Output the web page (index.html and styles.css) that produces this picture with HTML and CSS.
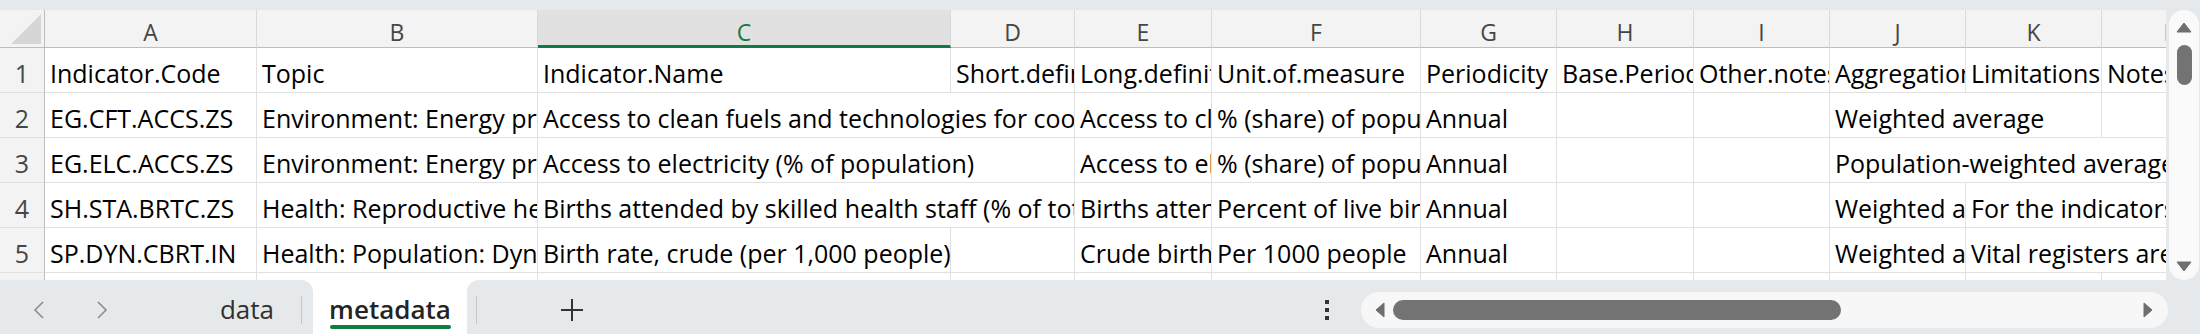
FILE: index.html
```html
<!DOCTYPE html>
<html lang="en">
  <head>
    <meta charset="UTF-8" />
    <meta name="viewport" content="width=device-width, initial-scale=1.0" />
    <title>metadata</title>
    <link rel="stylesheet" href="styles.css">
  </head>

  <body>
    <div class="app">
      <div class="top-strip"></div>

      <div class="main">
        <div class="sheet">
          <div class="grid">
            <!-- column headers -->
            <div class="cell corner">
              <svg width="30" height="30" viewBox="0 0 30 30"><polygon points="30,0 30,30 0,30" fill="#d6d6d6" /></svg>
            </div>
            <div class="cell col-head">A</div>
            <div class="cell col-head">B</div>
            <div class="cell col-head active">C</div>
            <div class="cell col-head">D</div>
            <div class="cell col-head">E</div>
            <div class="cell col-head">F</div>
            <div class="cell col-head">G</div>
            <div class="cell col-head">H</div>
            <div class="cell col-head">I</div>
            <div class="cell col-head">J</div>
            <div class="cell col-head">K</div>
            <div class="cell col-head">L</div>

            <!-- row 1 -->
            <div class="cell row-head">1</div>
            <div class="cell">Indicator.Code</div>
            <div class="cell">Topic</div>
            <div class="cell">Indicator.Name</div>
            <div class="cell">Short.definition</div>
            <div class="cell">Long.definition</div>
            <div class="cell">Unit.of.measure</div>
            <div class="cell">Periodicity</div>
            <div class="cell">Base.Period</div>
            <div class="cell">Other.notes</div>
            <div class="cell">Aggregation.method</div>
            <div class="cell">Limitations.and.exceptions</div>
            <div class="cell">Notes.from.original.source</div>

            <!-- row 2 -->
            <div class="cell row-head">2</div>
            <div class="cell">EG.CFT.ACCS.ZS</div>
            <div class="cell">Environment: Energy production &amp; use</div>
            <div class="cell span2">Access to clean fuels and technologies for cooking (% of population)</div>
            <div class="cell">Access to clean fuels and technologies for cooking is the proportion of total population primarily using clean cooking fuels and technologies.</div>
            <div class="cell">% (share) of population</div>
            <div class="cell">Annual</div>
            <div class="cell"></div>
            <div class="cell"></div>
            <div class="cell span2">Weighted average</div>
            <div class="cell"></div>

            <!-- row 3 -->
            <div class="cell row-head">3</div>
            <div class="cell">EG.ELC.ACCS.ZS</div>
            <div class="cell">Environment: Energy production &amp; use</div>
            <div class="cell span2">Access to electricity (% of population)</div>
            <div class="cell">Access to electricity is the percentage of population with access to electricity.</div>
            <div class="cell">% (share) of population</div>
            <div class="cell">Annual</div>
            <div class="cell"></div>
            <div class="cell"></div>
            <div class="cell span3">Population-weighted average</div>

            <!-- row 4 -->
            <div class="cell row-head">4</div>
            <div class="cell">SH.STA.BRTC.ZS</div>
            <div class="cell">Health: Reproductive health</div>
            <div class="cell span2">Births attended by skilled health staff (% of total)</div>
            <div class="cell">Births attended by skilled health staff are the percentage of deliveries attended by personnel trained to give the necessary supervision.</div>
            <div class="cell">Percent of live births</div>
            <div class="cell">Annual</div>
            <div class="cell"></div>
            <div class="cell"></div>
            <div class="cell">Weighted average</div>
            <div class="cell span2">For the indicators that are from household surveys, the year refers to the survey year.</div>

            <!-- row 5 -->
            <div class="cell row-head">5</div>
            <div class="cell">SP.DYN.CBRT.IN</div>
            <div class="cell">Health: Population: Dynamics</div>
            <div class="cell">Birth rate, crude (per 1,000 people)</div>
            <div class="cell"></div>
            <div class="cell">Crude birth rate indicates the number of live births occurring during the year, per 1,000 population estimated at midyear.</div>
            <div class="cell">Per 1000 people</div>
            <div class="cell">Annual</div>
            <div class="cell"></div>
            <div class="cell"></div>
            <div class="cell">Weighted average</div>
            <div class="cell span2">Vital registers are the preferred source of these data, but in many low- and middle-income countries they are not available.</div>

            <!-- row 6 -->
            <div class="cell row-head">6</div>
            <div class="cell"></div>
            <div class="cell"></div>
            <div class="cell"></div>
            <div class="cell"></div>
            <div class="cell"></div>
            <div class="cell"></div>
            <div class="cell"></div>
            <div class="cell"></div>
            <div class="cell"></div>
            <div class="cell"></div>
            <div class="cell"></div>
            <div class="cell"></div>
          </div>
        </div>

        <div class="vscroll">
          <svg width="16" height="11" viewBox="0 0 16 11"><path d="M8 1 L15 10 L1 10 Z" fill="#6e6e6e" stroke="#6e6e6e" stroke-linejoin="round" /></svg>
          <div class="vthumb"></div>
          <div class="spacer"></div>
          <svg width="16" height="11" viewBox="0 0 16 11"><path d="M1 1 L15 1 L8 10 Z" fill="#6e6e6e" stroke="#6e6e6e" stroke-linejoin="round" /></svg>
        </div>
      </div>

      <div class="bottom">
        <div class="bar-left">
          <svg class="chev chev-prev" width="12" height="18" viewBox="0 0 12 18"><polyline points="10,1 2,9 10,17" fill="none" stroke="#8c8c8c" stroke-width="1.6" /></svg>
          <svg class="chev chev-next" width="12" height="18" viewBox="0 0 12 18"><polyline points="2,1 10,9 2,17" fill="none" stroke="#8c8c8c" stroke-width="1.6" /></svg>
          <div class="tab">data</div>
          <div class="sep"></div>
        </div>

        <div class="tab-active">
          <span class="tab-label">metadata</span>
          <div class="tab-line"></div>
        </div>

        <div class="bar-right">
          <div class="sep sep-right"></div>
          <svg class="plus" width="22" height="22" viewBox="0 0 22 22"><path d="M11 0 V22 M0 11 H22" stroke="#333" stroke-width="2" /></svg>
          <svg class="kebab" width="4" height="20" viewBox="0 0 4 20"><rect x="0" y="0" width="4" height="4" fill="#333" /><rect x="0" y="8" width="4" height="4" fill="#333" /><rect x="0" y="16" width="4" height="4" fill="#333" /></svg>
          <div class="hscroll">
            <svg width="10" height="16" viewBox="0 0 10 16"><path d="M9 1 L9 15 L1 8 Z" fill="#6e6e6e" stroke="#6e6e6e" stroke-linejoin="round" /></svg>
            <div class="hthumb"></div>
            <div class="spacer"></div>
            <svg width="10" height="16" viewBox="0 0 10 16"><path d="M1 1 L1 15 L9 8 Z" fill="#6e6e6e" stroke="#6e6e6e" stroke-linejoin="round" /></svg>
          </div>
        </div>
      </div>
    </div>
  </body>
</html>
```

FILE: styles.css
```css
body {
  margin: 0;
  background-color: #e6e9ec;
  font-family: "Open Sans", "Noto Sans", sans-serif;
}

.app {
  width: 2200px;
  height: 334px;
  display: flex;
  flex-direction: column;
  overflow: hidden;
}

.top-strip {
  height: 10px;
  flex-shrink: 0;
}

.main {
  display: flex;
  height: 270px;
  flex-shrink: 0;
}

.sheet {
  width: 2166px;
  height: 270px;
  overflow: hidden;
  background-color: #fff;
  flex-shrink: 0;
}

.grid {
  display: grid;
  grid-template-columns: 45px 212px 281px 413px 124px 137px 209px 136px 137px 136px 136px 136px 136px;
  grid-template-rows: 38px repeat(6, 45px);
  width: max-content;
}

.cell {
  box-sizing: border-box;
  display: flex;
  align-items: center;
  padding: 6px 0 0 5px;
  border-right: 1px solid #e1e1e1;
  border-bottom: 1px solid #e1e1e1;
  font-size: 25px;
  line-height: 1;
  color: #000;
  white-space: nowrap;
  overflow: hidden;
}

.span2 {
  grid-column: span 2;
}

.span3 {
  grid-column: span 3;
}

.corner {
  background-color: #f3f3f3;
  justify-content: flex-end;
  align-items: flex-end;
  padding: 0 3px 3px 0;
  border-right: 1px solid #bdbdbd;
  border-bottom: 1px solid #bdbdbd;
}

.col-head {
  background-color: #f3f3f3;
  justify-content: center;
  align-items: flex-end;
  padding: 0 0 3px 0;
  font-size: 23px;
  color: #464646;
  border-right: 1px solid #dadada;
  border-bottom: 1px solid #bdbdbd;
}

.col-head.active {
  background-color: #e1e1e1;
  color: #107c41;
  border-bottom: 3px solid #107c41;
  padding-bottom: 1px;
}

.row-head {
  background-color: #f3f3f3;
  justify-content: center;
  padding-left: 0;
  color: #464646;
  border-right: 1px solid #bdbdbd;
}

.vscroll {
  box-sizing: border-box;
  width: 30px;
  height: 270px;
  margin-left: 3px;
  padding: 12px 0 8px;
  background-color: #fafafa;
  border-radius: 15px;
  display: flex;
  flex-direction: column;
  align-items: center;
}

.vthumb {
  width: 15px;
  height: 40px;
  margin-top: 12px;
  border-radius: 8px;
  background-color: #737373;
}

.spacer {
  flex: 1;
}

.bottom {
  display: flex;
  height: 54px;
  background-color: #fff;
  flex-shrink: 0;
}

.bar-left {
  box-sizing: border-box;
  width: 313px;
  padding-top: 6px;
  display: flex;
  align-items: center;
  background-color: #e6e9ec;
  border-top-right-radius: 12px;
}

.chev-prev {
  margin-left: 33px;
}

.chev-next {
  margin-left: 51px;
}

.tab {
  box-sizing: border-box;
  width: 108px;
  margin-left: 85px;
  align-self: flex-start;
  padding-top: 10px;
  text-align: center;
  font-size: 26px;
  line-height: 26px;
  color: #303030;
}

.sep {
  width: 1px;
  height: 28px;
  background-color: #c6c6c6;
}

.tab-active {
  width: 154px;
  padding-top: 16px;
  display: flex;
  flex-direction: column;
  align-items: center;
  background-color: #fff;
}

.tab-label {
  font-size: 26px;
  line-height: 26px;
  font-weight: 600;
  color: #242424;
}

.tab-line {
  align-self: stretch;
  height: 4px;
  margin: 3px 16px 0 17px;
  border-radius: 2px;
  background-color: #107c41;
}

.bar-right {
  box-sizing: border-box;
  flex: 1;
  padding-top: 6px;
  display: flex;
  align-items: center;
  background-color: #e6e9ec;
  border-top-left-radius: 12px;
}

.sep-right {
  margin-left: 9px;
}

.plus {
  margin-left: 84px;
}

.kebab {
  margin-left: 742px;
}

.hscroll {
  box-sizing: border-box;
  width: 807px;
  height: 36px;
  margin-left: 32px;
  padding: 0 15px 0 14px;
  display: flex;
  align-items: center;
  background-color: #f7f7f7;
  border-radius: 18px;
}

.hthumb {
  width: 448px;
  height: 20px;
  margin-left: 8px;
  border-radius: 10px;
  background-color: #737373;
}
```
